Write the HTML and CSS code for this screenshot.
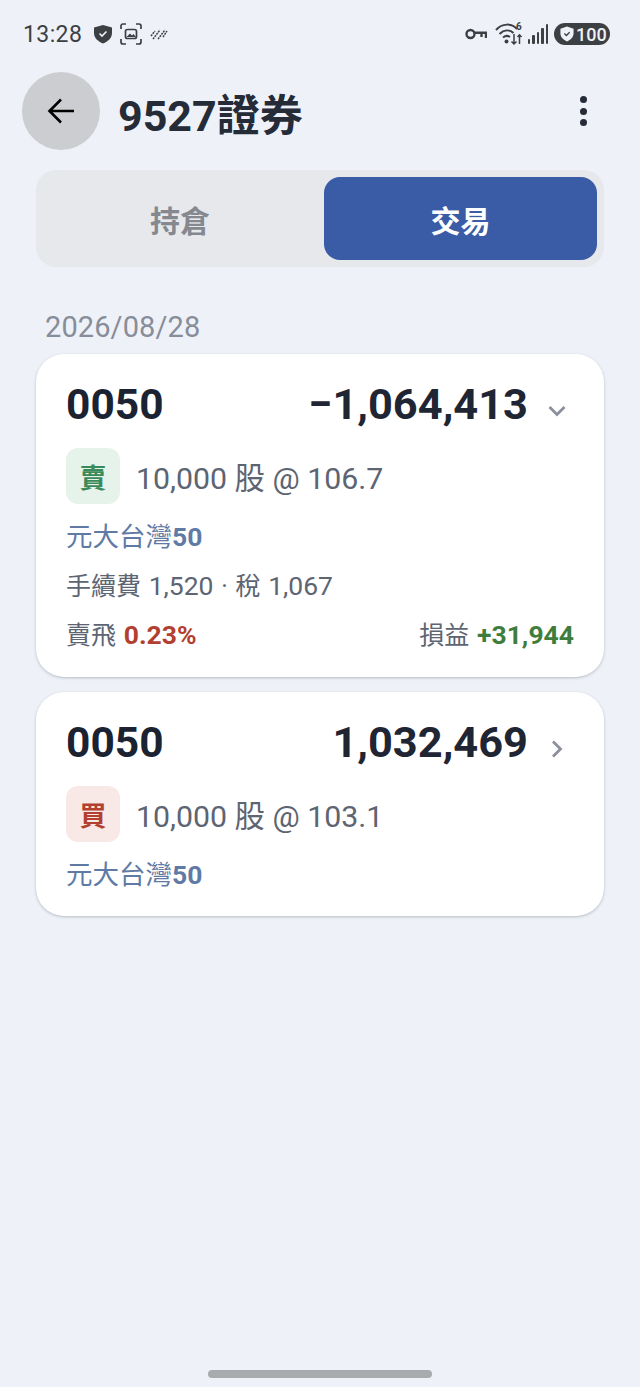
FILE: index.html

```html
<!DOCTYPE html>
<html lang="zh-Hant">
<head>
    <meta charset="UTF-8">
    <meta name="viewport" content="width=device-width, initial-scale=1.0">
    <title>9527證券</title>
    <link rel="stylesheet" href="styles.css">
</head>
<body>
    <div class="phone">
        <div class="status-bar">
            <div class="status-left">
                <span class="clock">13:28</span>
                <svg class="ic-shield" viewBox="0 0 20 20"><path d="M10 1 L19 3.500 V9 C19 14 15 17.500 10 19.500 C5 17.500 1 14 1 9 V3.500 Z" fill="#3d4043"/><path d="M6.500 9.500 L9 12 L13.500 7.500" fill="none" stroke="#eef2f8" stroke-width="1.600"/></svg>
                <svg class="ic-shot" viewBox="0 0 22 22" fill="none" stroke="#3d4043" stroke-width="1.700"><path d="M1 6 V3 A2 2 0 0 1 3 1 H6 M16 1 H19 A2 2 0 0 1 21 3 V6 M21 16 V19 A2 2 0 0 1 19 21 H16 M6 21 H3 A2 2 0 0 1 1 19 V16"/><rect x="5.500" y="6.500" width="11" height="9" rx="2"/><path d="M6.500 14 L10 10.500 L12 12.500 L13.500 11 L16 14 Z" fill="#3d4043" stroke="none"/></svg>
                <svg class="ic-lines" viewBox="0 0 18 12" fill="none" stroke="#3d4043" stroke-width="1.500" stroke-dasharray="2 .8"><path d="M1 8 L5 3 M3 11 L10 2 M8 11 L15 2 M13 9 L17 3"/></svg>
            </div>
            <div class="status-right">
                <svg class="ic-key" viewBox="0 0 22 12" fill="none" stroke="#3d4043" stroke-width="2.400"><circle cx="5.500" cy="6" r="4"/><path d="M9.500 4.800 H21 V10 M16.500 4.800 V9"/></svg>
                <svg class="ic-wifi" viewBox="0 0 28 24" fill="none" stroke="#3d4043" stroke-width="2"><path d="M1 8 C7 1 17 1 22 7 M4.500 12 C9 7.500 14.500 7.500 18.500 11 M8 15.500 C10.500 13.500 13 13.500 15 15"/><circle cx="11.500" cy="19.500" r="2" fill="#3d4043" stroke="none"/><path d="M19 12 V22 M16.500 19.500 L19 22 L21.500 19.500 M24.500 22 V13 M22.500 15 L24.500 12.800 L26.500 15" stroke-width="1.500"/></svg>
                <span class="wifi-six">6</span>
                <div class="signal"><i class="s1"></i><i class="s2"></i><i class="s3"></i><i class="s4"></i><i class="s5"></i></div>
                <div class="battery">
                    <svg viewBox="0 0 16 18"><path d="M8 .5 L15.500 3 V8 C15.500 12.500 12 15.500 8 17.500 C4 15.500 .5 12.500 .5 8 V3 Z" fill="#eef2f8"/><path d="M5 8.500 L7.300 10.800 L11 7" fill="none" stroke="#3d4043" stroke-width="1.500"/></svg>
                    <span>100</span>
                </div>
            </div>
        </div>

        <div class="app-header">
            <div class="back-button">
                <svg viewBox="0 0 28 28" fill="none" stroke="#000" stroke-width="2.600"><path d="M27 14 H3 M14 2.500 L2.500 14 L14 25.500"/></svg>
            </div>
            <h1 class="title">9527證券</h1>
            <div class="more"><i></i><i></i><i></i></div>
        </div>

        <div class="tabs">
            <div class="tab tab-first">持倉</div>
            <div class="tab tab-active">交易</div>
        </div>

        <div class="date">2026/08/28</div>

        <div class="card-list">
            <div class="card">
                <div class="card-top">
                    <span class="code">0050</span>
                    <span class="amount">−1,064,413</span>
                    <svg class="chevron" viewBox="0 0 18 12" fill="none" stroke="#8b909c" stroke-width="2.800"><path d="M1.500 2 L9 9.500 L16.500 2"/></svg>
                </div>
                <div class="trade-row">
                    <span class="badge badge-sell">賣</span>
                    <span class="trade-text">10,000 股 @ 106.7</span>
                </div>
                <div class="name">元大台灣<b>50</b></div>
                <div class="detail">手續費 <span class="num">1,520</span> · 稅 <span class="num">1,067</span></div>
                <div class="card-bottom">
                    <span class="detail">賣飛 <b class="num red">0.23%</b></span>
                    <span class="detail">損益 <b class="num green">+31,944</b></span>
                </div>
            </div>

            <div class="card">
                <div class="card-top">
                    <span class="code">0050</span>
                    <span class="amount">1,032,469</span>
                    <svg class="chevron chevron-right" viewBox="0 0 12 18" fill="none" stroke="#8b909c" stroke-width="2.800"><path d="M2 1.500 L9.500 9 L2 16.500"/></svg>
                </div>
                <div class="trade-row">
                    <span class="badge badge-buy">買</span>
                    <span class="trade-text">10,000 股 @ 103.1</span>
                </div>
                <div class="name">元大台灣<b>50</b></div>
            </div>
        </div>

        <div class="home-bar"></div>
    </div>
</body>
</html>
```

FILE: styles.css

```css
* {
    box-sizing: border-box;
}

body {
    margin: 0;
    font-family: Roboto, "Noto Sans CJK TC", sans-serif;
    background: #eef2f8;
    color: #1f2533;
}

.phone {
    position: relative;
    width: 640px;
    height: 1387px;
    overflow: hidden;
}

.status-bar {
    height: 72px;
    padding: 21px 30px 0 23px;
    display: flex;
    justify-content: space-between;
    align-items: flex-start;
}

.status-left,
.status-right {
    display: flex;
    align-items: center;
    height: 26px;
}

.clock {
    font-size: 23px;
    color: #3d4043;
    letter-spacing: 0.4px;
}

.ic-shield {
    width: 20px;
    height: 20px;
    margin-left: 11px;
}

.ic-shot {
    width: 22px;
    height: 22px;
    margin-left: 7px;
}

.ic-lines {
    width: 18px;
    height: 12px;
    margin-left: 8px;
}

.ic-key {
    width: 22px;
    height: 12px;
}

.ic-wifi {
    width: 28px;
    height: 24px;
    margin-left: 8px;
}

.wifi-six {
    position: absolute;
    left: 516px;
    top: 21px;
    font-size: 10px;
    font-weight: 700;
    color: #3d4043;
}

.signal {
    display: flex;
    align-items: flex-end;
    gap: 2px;
    height: 20px;
    margin-left: 5px;
}

.signal i {
    display: block;
    width: 2.500px;
    background: #3d4043;
    border-radius: 1px;
}

.s1 { height: 5px; }
.s2 { height: 9px; }
.s3 { height: 12px; }
.s4 { height: 16px; }
.s5 { height: 20px; }

.battery {
    display: flex;
    align-items: center;
    gap: 2px;
    width: 56px;
    height: 22px;
    margin-left: 6px;
    padding-left: 6px;
    border-radius: 11px;
    background: #3d4043;
    color: #eef2f8;
    font-size: 18px;
    font-weight: 500;
}

.battery svg {
    width: 14px;
    height: 16px;
}

.app-header {
    display: flex;
    align-items: center;
    height: 78px;
    padding: 0 53px 0 22px;
}

.back-button {
    width: 78px;
    height: 78px;
    border-radius: 50%;
    background: #cccdd0;
    display: flex;
    align-items: center;
    justify-content: center;
}

.back-button svg {
    width: 28px;
    height: 28px;
}

.title {
    margin: 9px 0 0 18px;
    flex: 1;
    font-size: 43px;
    line-height: 48px;
    font-weight: 700;
    color: #252b37;
}

.more {
    display: flex;
    flex-direction: column;
    gap: 4.500px;
}

.more i {
    display: block;
    width: 7px;
    height: 7px;
    border-radius: 50%;
    background: #252b37;
}

.tabs {
    display: flex;
    height: 97px;
    margin: 20px 36px 0;
    padding: 7px;
    border-radius: 20px;
    background: #e6e8ec;
}

.tab {
    flex: 1;
    display: flex;
    align-items: center;
    justify-content: center;
    font-size: 30px;
    font-weight: 700;
    color: #85888f;
    border-radius: 16px;
}

.tab-first {
    padding-right: 7px;
}

.tab-active {
    flex: 0 0 273px;
    background: #3a5ba5;
    color: #fff;
}

.date {
    margin: 43px 0 0 45px;
    font-size: 29px;
    line-height: 34px;
    letter-spacing: 0.1px;
    color: #878d99;
}

.card-list {
    display: flex;
    flex-direction: column;
    gap: 15px;
    margin: 10px 36px 0;
}

.card {
    padding: 25px 30px 24px;
    border-radius: 28px;
    background: #fff;
    box-shadow: 0 1px 3px rgba(40, 50, 70, 0.28);
}

.card-top {
    display: flex;
    align-items: center;
    height: 50px;
}

.code {
    flex: 1;
    font-size: 42.500px;
    font-weight: 700;
    color: #1b2231;
}

.amount {
    font-size: 43.400px;
    font-weight: 700;
    color: #1f2533;
}

.chevron {
    width: 18px;
    height: 12px;
    margin: 14px 8px 0 20px;
}

.chevron-right {
    width: 12px;
    height: 18px;
    margin: 14px 11px 0 23px;
}

.trade-row {
    display: flex;
    align-items: center;
    gap: 16px;
    margin-top: 19px;
}

.badge {
    width: 54px;
    height: 56px;
    display: flex;
    align-items: center;
    justify-content: center;
    border-radius: 12px;
    font-size: 27px;
    font-weight: 700;
}

.badge-sell {
    background: #e6f3ea;
    color: #3a8a5a;
}

.badge-buy {
    background: #f8e9e7;
    color: #b23f30;
}

.trade-text {
    font-size: 30.300px;
    color: #5d6472;
}

.name {
    margin-top: 16px;
    font-size: 26.500px;
    line-height: 34px;
    color: #5f7ba5;
}

.name b {
    font-weight: 700;
}

.detail {
    font-size: 25px;
    line-height: 34px;
    word-spacing: 1.500px;
    color: #5d6472;
}

.num {
    font-size: 26.500px;
    line-height: 1;
}

.card > .detail {
    margin-top: 16px;
}

.card-bottom {
    display: flex;
    justify-content: space-between;
    margin-top: 15px;
}

.red {
    color: #b23f30;
}

.green {
    color: #3f7d3d;
}

.home-bar {
    position: absolute;
    left: 208px;
    top: 1370px;
    width: 224px;
    height: 8px;
    border-radius: 4px;
    background: #a8abad;
}
```
